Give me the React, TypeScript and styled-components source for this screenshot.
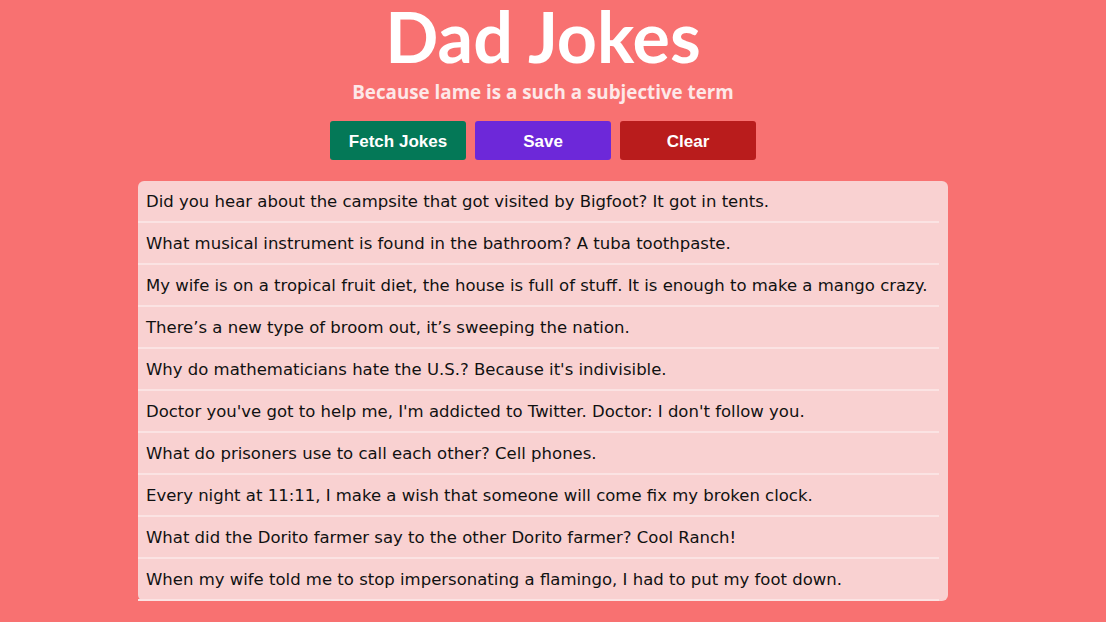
import React from "react";
import styled, { createGlobalStyle } from "styled-components";

const Global = createGlobalStyle`
  html, body { margin: 0; padding: 0; background: #f87171; }
  body { font-family: "DejaVu Sans", "Noto Sans", sans-serif; }
`;

const Page = styled.main`
  display: flex;
  flex-direction: column;
  align-items: center;
  min-height: 622px;
  padding-right: 20px;
`;

const Title = styled.h1`
  margin: 0;
  font-family: "Lato", "Noto Sans", sans-serif;
  font-size: 70px;
  font-weight: 700;
  line-height: 72px;
  color: #ffffff;
`;

const Subtitle = styled.p`
  margin: 8px 0 0;
  font-family: "Open Sans", sans-serif;
  font-size: 18.8px;
  font-weight: 700;
  color: #fde8e8;
  line-height: 24px;
`;

const Toolbar = styled.div`
  display: flex;
  gap: 9px;
  margin-top: 17px;
`;

const Button = styled.button<{ $bg: string }>`
  width: 136px;
  height: 39px;
  padding: 2px 0 0;
  border: none;
  border-radius: 3px;
  background: ${(p) => p.$bg};
  color: #fff;
  font-family: "Liberation Sans", Arial, sans-serif;
  font-weight: 700;
  font-size: 17px;
  cursor: pointer;
`;

const List = styled.ul`
  list-style: none;
  margin: 21px 0 0;
  padding: 0 9px 0 0;
  width: 801px;
  background: #f9d1d1;
  border-radius: 6px;
`;

const Item = styled.li`
  height: 40px;
  padding: 0 0 0 8px;
  display: flex;
  align-items: center;
  font-size: 16.5px;
  color: #111111;
  border-bottom: 2px solid #fbe3e3;
`;

const jokes = [
  "Did you hear about the campsite that got visited by Bigfoot? It got in tents.",
  "What musical instrument is found in the bathroom? A tuba toothpaste.",
  "My wife is on a tropical fruit diet, the house is full of stuff. It is enough to make a mango crazy.",
  "There’s a new type of broom out, it’s sweeping the nation.",
  "Why do mathematicians hate the U.S.? Because it's indivisible.",
  "Doctor you've got to help me, I'm addicted to Twitter. Doctor: I don't follow you.",
  "What do prisoners use to call each other? Cell phones.",
  "Every night at 11:11, I make a wish that someone will come fix my broken clock.",
  "What did the Dorito farmer say to the other Dorito farmer? Cool Ranch!",
  "When my wife told me to stop impersonating a flamingo, I had to put my foot down.",
];

export default function App() {
  return (
    <>
      <Global />
      <Page>
        <Title>Dad Jokes</Title>
        <Subtitle>Because lame is a such a subjective term</Subtitle>
        <Toolbar>
          <Button $bg="#047857">Fetch Jokes</Button>
          <Button $bg="#6d28d9">Save</Button>
          <Button $bg="#b91c1c">Clear</Button>
        </Toolbar>
        <List>
          {jokes.map((j) => (
            <Item key={j}>{j}</Item>
          ))}
        </List>
      </Page>
    </>
  );
}
